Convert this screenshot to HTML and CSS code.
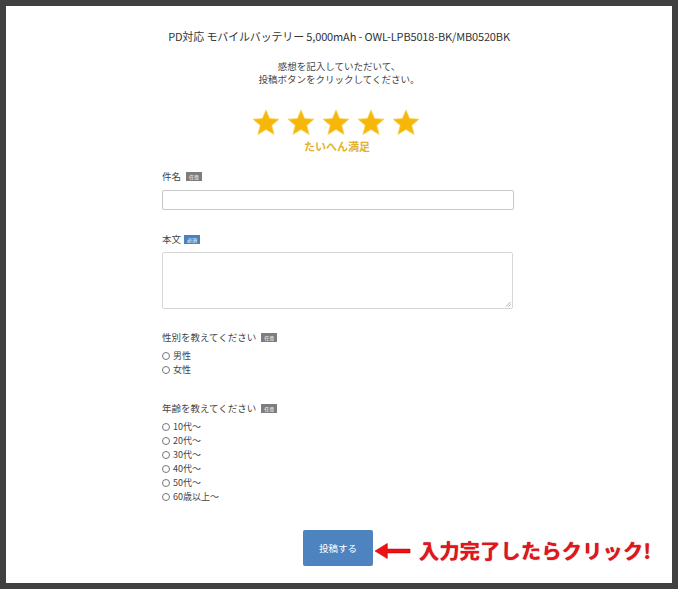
FILE: index.html
```html
<!DOCTYPE html>
<html lang="ja">
<head>
<meta charset="utf-8">
<link rel="stylesheet" href="styles.css">
</head>
<body>
<div class="sheet">
  <h1 class="title">PD対応 モバイルバッテリー 5,000mAh - OWL-LPB5018-BK/MB0520BK</h1>
  <p class="lead">感想を記入していただいて、<br>投稿ボタンをクリックしてください。</p>
  <div class="stars">
    <svg class="star" viewBox="0 0 28 27"><polygon points="14,1 17.6,9.6 27,10.2 19.8,16.3 22.1,25.5 14,20.5 5.9,25.5 8.2,16.3 1,10.2 10.4,9.6"/></svg>
    <svg class="star" viewBox="0 0 28 27"><polygon points="14,1 17.6,9.6 27,10.2 19.8,16.3 22.1,25.5 14,20.5 5.9,25.5 8.2,16.3 1,10.2 10.4,9.6"/></svg>
    <svg class="star" viewBox="0 0 28 27"><polygon points="14,1 17.6,9.6 27,10.2 19.8,16.3 22.1,25.5 14,20.5 5.9,25.5 8.2,16.3 1,10.2 10.4,9.6"/></svg>
    <svg class="star" viewBox="0 0 28 27"><polygon points="14,1 17.6,9.6 27,10.2 19.8,16.3 22.1,25.5 14,20.5 5.9,25.5 8.2,16.3 1,10.2 10.4,9.6"/></svg>
    <svg class="star" viewBox="0 0 28 27"><polygon points="14,1 17.6,9.6 27,10.2 19.8,16.3 22.1,25.5 14,20.5 5.9,25.5 8.2,16.3 1,10.2 10.4,9.6"/></svg>
  </div>
  <p class="rating">たいへん満足</p>

  <form class="form">
    <div class="label lbl-subject">件名<span class="badge">任意</span></div>
    <div class="input"></div>

    <div class="label lbl-body">本文<span class="badge req">必須</span></div>
    <div class="textarea"><svg class="grip" viewBox="0 0 6 6"><path d="M1 5.5L5.5 1M3.5 5.5L5.5 3.5" stroke="#999" stroke-width="0.8" fill="none"/></svg></div>

    <div class="label lbl-gender">性別を教えてください<span class="badge wide">任意</span></div>
    <ul class="radios">
      <li><span class="dot"></span>男性</li>
      <li><span class="dot"></span>女性</li>
    </ul>

    <div class="label lbl-age">年齢を教えてください<span class="badge wide">任意</span></div>
    <ul class="radios">
      <li><span class="dot"></span>10代〜</li>
      <li><span class="dot"></span>20代〜</li>
      <li><span class="dot"></span>30代〜</li>
      <li><span class="dot"></span>40代〜</li>
      <li><span class="dot"></span>50代〜</li>
      <li><span class="dot"></span>60歳以上〜</li>
    </ul>

    <div class="submit-row">
      <div class="submit">投稿する
        <div class="note">
          <svg class="arrow" viewBox="0 0 38 18"><polygon points="0,9 13,1 13,7 37,7 37,11 13,11 13,17" /></svg>
          <span class="note-text">入力完了したらクリック!</span>
        </div>
      </div>
    </div>
  </form>
</div>
</body>
</html>
```

FILE: styles.css
```css
* { box-sizing: border-box; }
html, body { margin: 0; padding: 0; }
body {
  background: #404040;
  padding: 6px;
  font-family: "Noto Sans CJK JP", "Noto Sans", "Liberation Sans", sans-serif;
  color: #333;
}
.sheet {
  background: #fff;
  height: 577px;
  padding-top: 22px;
}
.title {
  margin: 0;
  font-size: 11px;
  line-height: 16px;
  font-weight: normal;
  text-align: center;
  color: #333;
  letter-spacing: -0.15px;
}
.lead {
  margin: 16px 0 0;
  font-size: 9.5px;
  line-height: 13px;
  text-align: center;
  color: #444;
}
.stars {
  margin-top: 23px;
  display: flex;
  justify-content: center;
  gap: 7px;
  height: 27px;
  padding-right: 6px;
}
.star { width: 28px; height: 27px; display: block; }
.star polygon {
  fill: #f6b60a;
  stroke: #f8d35a;
  stroke-width: 0.8;
  stroke-linejoin: round;
}
.rating {
  margin: 3px 0 0;
  font-size: 11px;
  line-height: 14px;
  font-weight: bold;
  text-align: center;
  color: #e4b12f;
  padding-right: 4px;
}
.form {
  width: 352px;
  margin: 0 0 0 156px;
}
.label {
  font-size: 9.5px;
  line-height: 14px;
  color: #444;
  display: flex;
  align-items: center;
}
.lbl-subject { margin-top: 16px; }
.lbl-body { margin-top: 22px; }
.lbl-gender { margin-top: 21px; }
.lbl-age { margin-top: 24px; }
.badge {
  display: inline-block;
  background: #7d7d7d;
  color: #fff;
  font-size: 5px;
  line-height: 9px;
  height: 9px;
  width: 16px;
  text-align: center;
  margin-left: 5px;
}
.badge.req { background: #4b82bb; margin-left: 3px; }
.badge.wide { margin-left: 5px; }
.input {
  margin-top: 7px;
  height: 20px;
  border: 1px solid #c8c8c8;
  border-radius: 2px;
}
.textarea {
  margin-top: 6px;
  height: 57px;
  width: 351px;
  border: 1px solid #d6d6d6;
  border-radius: 2px;
  position: relative;
}
.grip {
  position: absolute;
  right: 1px;
  bottom: 1px;
  width: 6px;
  height: 6px;
}
.radios {
  list-style: none;
  margin: 5px 0 0;
  padding: 0;
}
.radios li {
  font-size: 9px;
  line-height: 14px;
  height: 14px;
  color: #444;
  display: flex;
  align-items: center;
}
.dot {
  width: 8px;
  height: 8px;
  border: 1px solid #777;
  border-radius: 50%;
  margin-right: 3px;
  flex: none;
}
.submit-row {
  margin-top: 26px;
  display: flex;
  justify-content: center;
}
.submit {
  position: relative;
  width: 70px;
  height: 36px;
  background: #4d84bf;
  border-radius: 2px;
  color: #fff;
  font-size: 9.5px;
  line-height: 36px;
  text-align: center;
}
.note {
  position: absolute;
  left: 72px;
  top: 10px;
  display: flex;
  align-items: center;
  white-space: nowrap;
  height: 22px;
}
.arrow {
  width: 36px;
  height: 18px;
  display: block;
}
.arrow polygon { fill: #ee1111; stroke: #b00; stroke-width: 0.6; }
.note-text {
  margin-left: 8px;
  font-size: 20px;
  line-height: 22px;
  font-weight: bold;
  color: #e8141c;
  text-shadow: 0 0 1px #7a0000;
  letter-spacing: 0.4px;
}
```
